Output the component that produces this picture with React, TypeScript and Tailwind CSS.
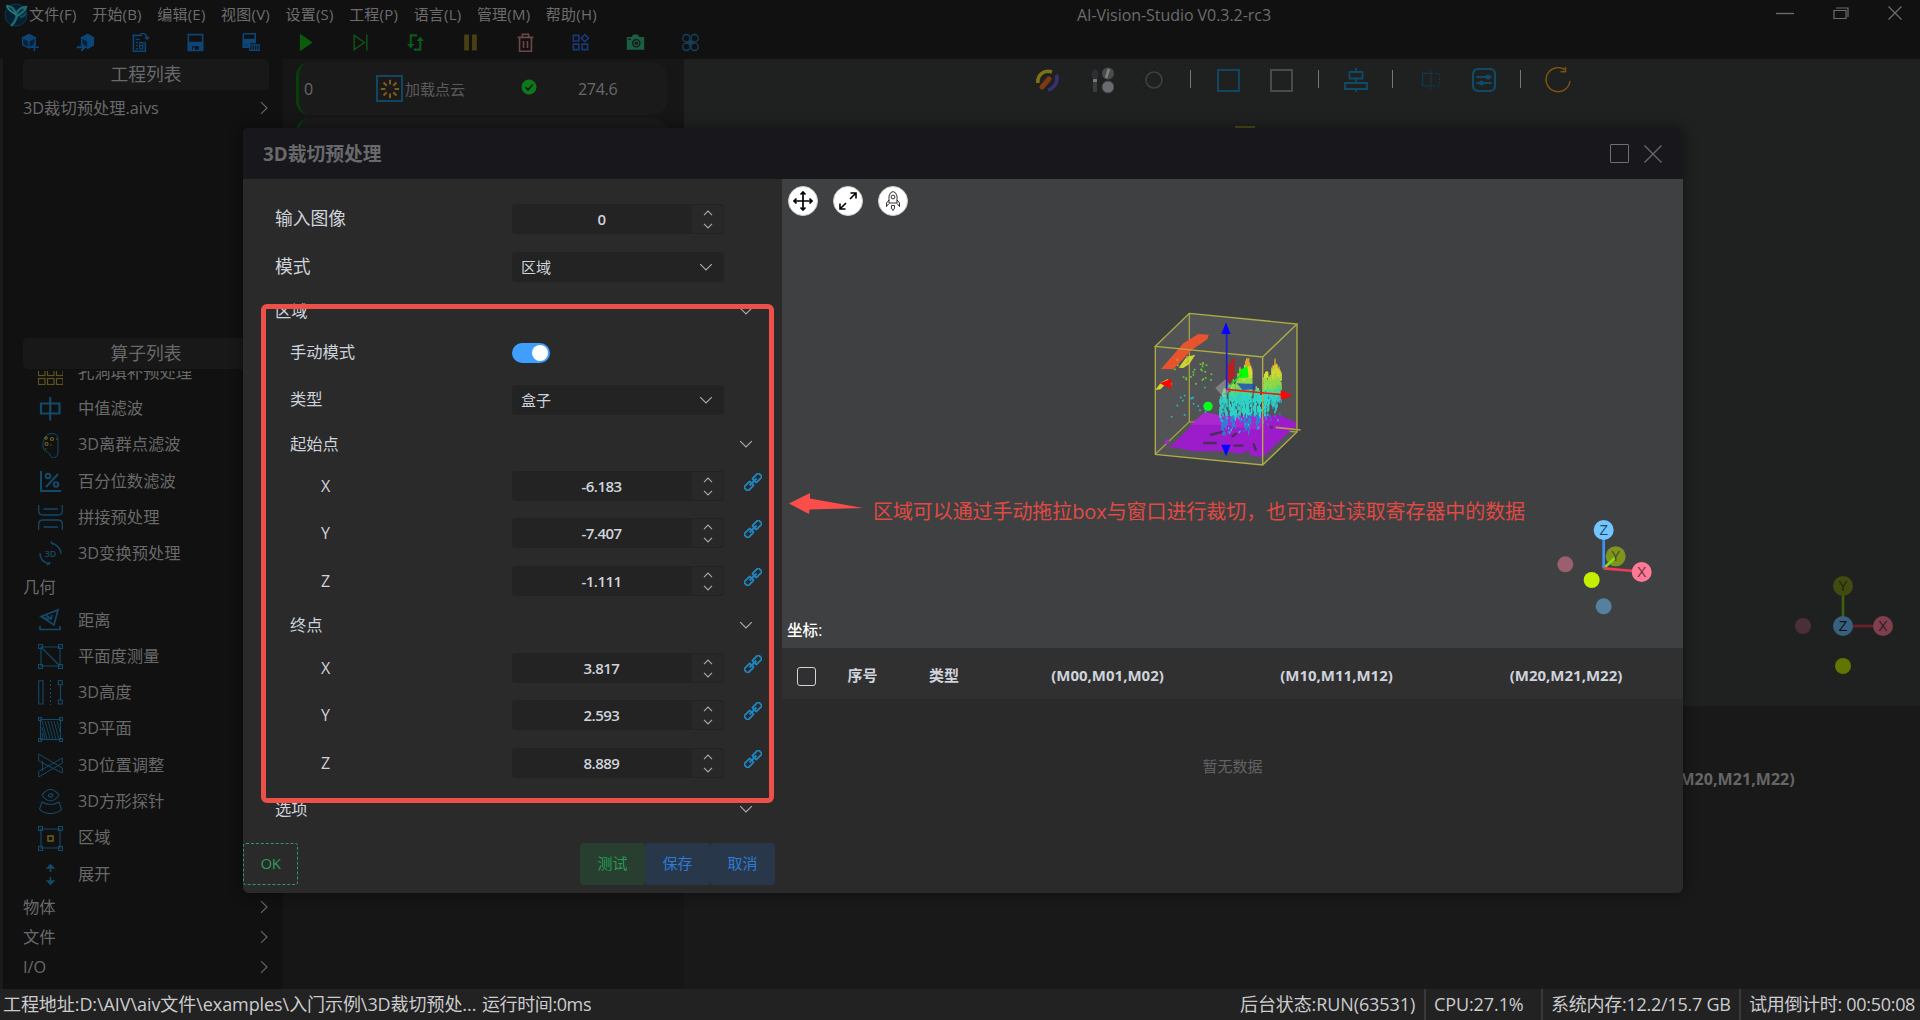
import React from "react";

type SvgProps = { children: React.ReactNode; className?: string; box?: string };

function Icon({ children, className = "", box = "0 0 24 24" }: SvgProps) {
  return (
    <svg viewBox={box} className={`shrink-0 ${className}`} fill="none" stroke="currentColor" strokeWidth="1.6">
      {children}
    </svg>
  );
}

const menus = ["文件(F)", "开始(B)", "编辑(E)", "视图(V)", "设置(S)", "工程(P)", "语言(L)", "管理(M)", "帮助(H)"];

function Logo() {
  return (
    <Icon box="0 0 26 28" className="h-[28px] w-[26px]">
      <circle cx="13" cy="14" r="11" fill="#061f2e" stroke="#0b3a52" strokeWidth="1" />
      <path d="M3 5 C8 4 12 9 13 13 C15 9 19 6 23 6 C22 11 17 13 14 15 C13 19 11 22 8 25" stroke="#1b6b70" strokeWidth="2.4" />
      <path d="M4 6 C8 12 12 12 13 14" stroke="#2b8585" strokeWidth="1.6" />
      <path d="M17 16 C20 16 22 14 23 12" stroke="#0d4f66" strokeWidth="2" />
    </Icon>
  );
}

const toolbar: { color: string; art: React.ReactNode }[] = [
  {
    color: "text-[#0e4577]",
    art: (
      <>
        <path d="M10 2 L18 6 V15 L10 19 L2 15 V6 Z" fill="#07223b" />
        <path d="M10 2 L18 6 L10 10 L2 6 Z" fill="currentColor" />
        <path d="M10 10 V19" />
        <path d="M17 13 V23 M12.5 18 H22.5" strokeWidth="2" />
      </>
    ),
  },
  {
    color: "text-[#0e4577]",
    art: (
      <>
        <path d="M15 2 L22 6 V15 L15 19 L7 15 V6 Z" fill="#07223b" />
        <path d="M15 2 L22 6 L15 10 L7 6 Z M15 10 L22 6 V15 L15 19 Z" fill="currentColor" />
        <path d="M1 18 H10 M6.5 13.5 L11 18 L6.5 22.5" strokeWidth="2.4" />
      </>
    ),
  },
  {
    color: "text-[#0e4577]",
    art: (
      <>
        <path d="M14 3 H3 V23 H18 V11" strokeWidth="2" />
        <path d="M6 8 H11 M6 12 H9 M6 16 H9 M6 20 H9 M11 12 H15 V20 H11 Z M11 16 H15" />
        <path d="M12 1 C17 0 20 2 20.5 7 M17.5 5 L20.5 8 L23 5" />
      </>
    ),
  },
  {
    color: "text-[#0e4577]",
    art: (
      <>
        <path d="M3 2 H21 V22 H3 Z" strokeWidth="2" />
        <path d="M3 12 H21 V22 H17 V16 H7 V22 H3 Z" fill="currentColor" />
        <path d="M10 18 V22" strokeWidth="2.5" />
      </>
    ),
  },
  {
    color: "text-[#0e4577]",
    art: (
      <>
        <path d="M3 1 H18 V11 M3 1 V18 H11" strokeWidth="2" />
        <path d="M3 8 H18 V12 H11 V18 H8 V13 H6 V18 H3 Z" fill="currentColor" />
        <path d="M11 15 H23 V22 H11 Z M14 15 V22 M17 15 V22 M20 15 V22" />
      </>
    ),
  },
  { color: "text-[#0a5c0c]", art: <path d="M5 1 L21 12 L5 23 Z" fill="currentColor" stroke="none" /> },
  { color: "text-[#0f5518]", art: <path d="M4 3 L17 12 L4 21 Z M20 2 V22" strokeWidth="1.8" /> },
  {
    color: "text-[#0a5c1c]",
    art: (
      <>
        <path d="M11 3 H6 V16 M13 21 H18 V8" strokeWidth="2.6" />
        <path d="M1.5 14 H10.5 L6 19.5 Z M13.5 10 H22.5 L18 4.5 Z" fill="currentColor" stroke="none" />
        <path d="M11 3 H14 M10 21 H13" strokeWidth="2.6" />
      </>
    ),
  },
  { color: "text-[#4a3f14]", art: <path d="M4 2 H10 V22 H4 Z M14 2 H20 V22 H14 Z" fill="currentColor" stroke="none" /> },
  {
    color: "text-[#6b4747]",
    art: <path d="M2 5.5 H22 M8 5 V1.5 H16 V5 M4.5 6 V23 H19.5 V6 M9.5 10 V19 M14.5 10 V19" strokeWidth="2" />,
  },
  {
    color: "text-[#19397a]",
    art: <path d="M3 3 H10 V10 H3 Z M3 14 H10 V21 H3 Z M14 14 H21 V21 H14 Z M17.5 2 L22 6.5 L17.5 11 L13 6.5 Z" strokeWidth="2" />,
  },
  {
    color: "text-[#1b5f42]",
    art: (
      <>
        <path d="M1 5 H7 L9 2 H15 L17 5 H23 V21 H1 Z" fill="currentColor" stroke="none" />
        <circle cx="13" cy="13" r="4.5" stroke="#111" />
        <circle cx="13" cy="13" r="1.5" stroke="#111" />
        <path d="M3 8 H6" stroke="#111" />
      </>
    ),
  },
  {
    color: "text-[#15425f]",
    art: (
      <>
        <circle cx="6.8" cy="6.5" r="4.6" />
        <circle cx="17.2" cy="6.5" r="4.6" />
        <circle cx="6.8" cy="17.5" r="4.6" />
        <circle cx="17.2" cy="17.5" r="4.6" />
        <path d="M8 12 H16 M12 9 V15" strokeWidth="2.4" />
      </>
    ),
  },
];

function Header() {
  return (
    <header className="h-[59px] shrink-0 bg-[#111111]">
      <div className="flex h-[29px] items-center">
        <div className="flex w-[1060px] items-center">
          <div className="flex w-[29px] justify-end">
            <Logo />
          </div>
          <nav className="flex gap-[15.6px] text-[15px] text-[#6c6c6e]">
            {menus.map((m) => (
              <span key={m} className="tracking-[0.2px]">{m}</span>
            ))}
          </nav>
        </div>
        <h1 className="ml-[17px] w-[200px] text-[16px] tracking-[-0.05px] text-[#6c6c6e]">AI-Vision-Studio V0.3.2-rc3</h1>
        <div className="ml-auto flex items-center gap-[36px] pr-[16px] pb-[4px] text-[#6c6c6e]">
          <Icon box="0 0 18 18" className="mr-[2px] size-[18px]"><path d="M0 9.5 H18" strokeWidth="1.4" /></Icon>
          <Icon box="0 0 18 18" className="size-[18px]"><path d="M2 6.5 H14 V14.5 H2 Z M4 4 H16 V13" strokeWidth="1.2" /></Icon>
          <Icon box="0 0 18 18" className="size-[18px]"><path d="M2.5 2.5 L15.5 15.5 M15.5 2.5 L2.5 15.5" strokeWidth="1.3" /></Icon>
        </div>
      </div>
      <div className="flex h-[26px] items-center pl-[3px]">
        {toolbar.map((t, i) => (
          <button key={i} className={`flex w-[55px] justify-center ${t.color}`}>
            <Icon className="size-[19px]">{t.art}</Icon>
          </button>
        ))}
      </div>
    </header>
  );
}

const corner = (x: number, y: number, s = 4) => <rect x={x} y={y} width={s} height={s} strokeWidth="1.1" />;

const filters: [string, React.ReactNode][] = [
  [
    "孔洞填补预处理",
    <g key="a" stroke="#5c551c" strokeWidth="1.2">
      {[1, 10, 19].flatMap((x) => [1, 10, 19].map((y) => <rect key={`${x}-${y}`} x={x - 0.5} y={y - 0.5} width="6.5" height="6" />))}
    </g>,
  ],
  ["中值滤波", <path key="a" d="M3 7.5 H21.5 V17.5 H3 Z M12.2 1 V24.5" strokeWidth="2.2" />],
  [
    "3D离群点滤波",
    <g key="a" strokeWidth="1">
      <path d="M11 1 C17 -0.5 20 2 20 7 V19 C20 25 14 27 12 22 C11 18 6 20 5 14 C4 10 7 2 11 1 Z" />
      <g stroke="#6b6320" strokeWidth="1.2">
        <circle cx="8" cy="5" r="1.2" />
        <circle cx="14" cy="6" r="1.5" />
        <circle cx="8.5" cy="11" r="1.5" />
        <path d="M18 6 H19.5 M12 12 H13.5 M7 16 H8.5" />
      </g>
    </g>,
  ],
  [
    "百分位数滤波",
    <g key="a" strokeWidth="2">
      <path d="M3 2 V22 H23 M8 18 L20 5" />
      <circle cx="10" cy="7" r="2.3" />
      <circle cx="18" cy="15.5" r="2.3" />
    </g>,
  ],
  [
    "拼接预处理",
    <path key="a" d="M0.7 0 V6 Q0.7 10 5 10 H20 Q24.3 10 24.3 6 V0 M5.5 4 H20 M0.7 25 V19 Q0.7 15 5 15 H20 Q24.3 15 24.3 19 V25 M5.5 22 H20" strokeWidth="1.3" />,
  ],
  [
    "3D变换预处理",
    <g key="a">
      <path d="M13 2 C19 3 23 8 23 13 M2 12 C2 18 6 22 12 23 M13 0.5 L15 3.5 M12 21 L9 24" strokeWidth="1.5" />
      <text x="12.5" y="16" textAnchor="middle" fontSize="9" fontWeight="600" fill="currentColor" stroke="none">3D</text>
    </g>,
  ],
];

const geometry: [string, React.ReactNode][] = [
  [
    "距离",
    <g key="a" strokeWidth="1.7">
      <path d="M3 8.5 L20 2 L16 17 Z M3 8.5 L11 11.5 M8.5 7.5 L13 11 L14 7 M2 18 V21.5 H22 V18" />
    </g>,
  ],
  [
    "平面度测量",
    <g key="a" strokeWidth="1.1">
      <path d="M3 3 H22 V22 H3 Z M3 3 L22 22" />
      {corner(0.5, 0.5)}
      {corner(20.5, 0.5)}
      {corner(0.5, 20.5)}
      {corner(20.5, 20.5)}
    </g>,
  ],
  [
    "3D高度",
    <g key="a" strokeWidth="1.1">
      <path d="M0.7 0.7 H5 V24 H0.7 Z M22.5 5 V20" />
      <path d="M12.5 0 V25" strokeDasharray="2 2" strokeWidth="1" />
      {corner(20.3, 0.7)}
      {corner(20.3, 20)}
    </g>,
  ],
  [
    "3D平面",
    <g key="a" strokeWidth="1.1">
      <rect x="2.5" y="2.5" width="20" height="20" />
      <path d="M4 4 L9 22 M7 4 L12 22 M10 4 L15 22 M13 4 L18 22 M16 4 L21 22 M19 4 L22 15 M4 10 L7 22 M4 16 L5 22" strokeWidth="0.9" />
      {corner(0.5, 0.5, 3)}
      {corner(21.5, 0.5, 3)}
      {corner(0.5, 21.5, 3)}
      {corner(21.5, 21.5, 3)}
    </g>,
  ],
  [
    "3D位置调整",
    <path key="a" d="M0.7 1 L24.3 15 V20 L0.7 8 Z M0.7 24 L24.3 10 V5 L0.7 18.5 Z M4.5 8 V18" strokeWidth="1" />,
  ],
  [
    "3D方形探针",
    <g key="a" strokeWidth="1.1">
      <path d="M4 6 Q12.5 -5 21 6 Q12.5 18 4 6 Z M4 13 Q12.5 18 21 13 L23.5 20 Q20 24.5 12.5 24.5 Q5 24.5 1.5 20 Z" />
      <ellipse cx="12.5" cy="6.5" rx="2.2" ry="1.6" />
    </g>,
  ],
  [
    "区域",
    <g key="a" strokeWidth="1.1">
      <path d="M3 3 H22 V22 H3 Z" />
      {corner(0.5, 0.5)}
      {corner(20.5, 0.5)}
      {corner(0.5, 20.5)}
      {corner(20.5, 20.5)}
      <rect x="10" y="10" width="5" height="5" stroke="#6b6320" strokeWidth="1.5" />
    </g>,
  ],
  [
    "展开",
    <path key="a" d="M12.5 3 V10 M12.5 15 V22 M9.5 6 L12.5 3 L15.5 6 Z M9.5 19 L12.5 22 L15.5 19 Z" strokeWidth="1.6" fill="currentColor" />,
  ],
];

function Operator({ name, art }: { name: string; art: React.ReactNode }) {
  return (
    <li className="flex h-[36.3px] items-center pl-[35px]">
      <span className="text-[#134a69]">
        <Icon box="0 0 25 25" className="size-[25px]">{art}</Icon>
      </span>
      <span className="ml-[15px] pb-px">{name}</span>
    </li>
  );
}

function Chevron({ className = "" }: { className?: string }) {
  return (
    <Icon box="0 0 14 14" className={`size-[14px] ${className}`}>
      <path d="M4 1.2 L10 7 L4 12.8" strokeWidth="1.1" />
    </Icon>
  );
}

function Sidebar() {
  return (
    <aside className="flex w-[283px] shrink-0 flex-col border-l-[3px] border-[#1b1b1b] bg-[#111111] text-[16.3px] text-[#69696b]">
      <section className="h-[279px]">
        <h2 className="ml-[20px] flex h-[31px] w-[246px] items-center justify-center rounded-[5px] bg-[#181818] text-[17.8px]">工程列表</h2>
        <div className="mt-[2px] flex h-[32px] items-center justify-between pr-[12px] pl-[20px]">
          <span>3D裁切预处理.aivs</span>
          <Chevron />
        </div>
      </section>
      <section className="flex min-h-0 grow flex-col">
        <h2 className="ml-[20px] flex h-[31px] w-[246px] shrink-0 items-center justify-center rounded-[5px] bg-[#181818] text-[17.8px]">算子列表</h2>
        <div className="mt-[2px] min-h-0 grow overflow-hidden">
          <ul className="mt-[-16.7px]">
            {filters.map(([n, a]) => (
              <Operator key={n} name={n} art={a} />
            ))}
          </ul>
          <h3 className="flex h-[30px] items-center pl-[20px]">几何</h3>
          <ul>
            {geometry.map(([n, a]) => (
              <Operator key={n} name={n} art={a} />
            ))}
          </ul>
          {["物体", "文件", "I/O"].map((n) => (
            <div key={n} className="flex h-[30px] items-center justify-between pr-[12px] pl-[20px]">
              <span>{n}</span>
              <Chevron />
            </div>
          ))}
        </div>
      </section>
    </aside>
  );
}

function FlowPanel() {
  const rays = [0, 45, 90, 135, 180, 225, 270, 315];
  return (
    <section className="flex w-[401px] shrink-0 flex-col gap-[3px] bg-[#161616] pt-[3px] pl-[13px] text-[16px] text-[#69696b]">
      <div className="flex h-[53px] w-[371px] items-center rounded-[14px] border-l-[3px] border-[#073f09] bg-[#1a1a1a]">
        <span className="ml-[5px] w-[72px]">0</span>
        <span className="flex size-[27px] items-center justify-center border-2 border-[#12455f]">
          <Icon box="0 0 24 24" className="size-[22px] text-[#81591a]">
            {rays.map((r) => (
              <path key={r} d="M12 2 V7" strokeWidth="2.2" transform={`rotate(${r} 12 12)`} />
            ))}
          </Icon>
        </span>
        <span className="ml-[2px] w-[116px] pt-[2px] text-[15px] text-[#5a5a5c]">加载点云</span>
        <Icon box="0 0 16 16" className="mb-[4px] size-[16px]">
          <circle cx="8" cy="8" r="7.5" fill="#0c7a1b" stroke="none" />
          <path d="M4.5 8.2 L7 10.8 L11.8 5.6" stroke="#111" strokeWidth="1.5" />
        </Icon>
        <span className="ml-[41px] tracking-[-0.3px]">274.6</span>
      </div>
      <div className="h-[53px] w-[371px] rounded-[14px] border-l-[3px] border-[#073f09] bg-[#1a1a1a]" />
    </section>
  );
}

function Divider({ className }: { className: string }) {
  return (
    <span className={`flex justify-center ${className}`}>
      <span className="mb-[3px] h-[18px] w-px bg-[#77777a]" />
    </span>
  );
}

function Workspace() {
  const cell = "flex justify-center";
  return (
    <main className="relative flex grow flex-col bg-[#191919]">
      <div className="relative h-[647px] bg-[#1f2120]">
        <div className="flex h-[42px] items-center pl-[336px]">
          <span className={`${cell} w-[54px]`}>
            <Icon className="size-[24px]">
              <path d="M3 15 C2 8 8 1 17 4" stroke="#81701a" strokeWidth="3.6" />
              <path d="M7 19 L14 11" stroke="#7c3a14" strokeWidth="5" strokeLinecap="round" />
              <path d="M21 7 C24 12 20 20 13 22" stroke="#393070" strokeWidth="3.6" />
            </Icon>
          </span>
          <span className={`${cell} w-[56px]`}>
            <Icon box="0 0 24 27" className="h-[27px] w-[24px]">
              <path d="M5 13 V25" stroke="#3c3c3e" strokeWidth="4" />
              <path d="M5 12 V15" stroke="#77777a" strokeWidth="4" />
              <path d="M5 2 C9 4 9 8 7 12 H3 C1 8 1 4 5 2 Z" fill="#2b2f33" stroke="none" />
              <circle cx="18" cy="6.5" r="6" fill="#4a4b4d" stroke="none" />
              <path d="M16 11 L19 2" stroke="#808080" strokeWidth="2.5" />
              <circle cx="18" cy="20" r="6" fill="#6a6b6d" stroke="#3b4249" strokeWidth="1" />
            </Icon>
          </span>
          <span className={`${cell} w-[48px]`}>
            <Icon className="size-[24px] text-[#3e4040]">
              <circle cx="12" cy="12" r="8" />
              <path d="M12 0 V1.5 M12 22.5 V24 M0 12 H1.5 M22.5 12 H24 M3.5 3.5 L4.5 4.5 M19.5 4.5 L20.5 3.5 M3.5 20.5 L4.5 19.5 M19.5 19.5 L20.5 20.5" stroke="#151616" />
            </Icon>
          </span>
          <Divider className="w-[24px]" />
          <span className={`${cell} w-[53px]`}><span className="size-[23px] border-2 border-[#12455f]" /></span>
          <span className={`${cell} w-[53px]`}><span className="size-[23px] border-2 border-[#494b4b]" /></span>
          <Divider className="w-[20px]" />
          <span className={`${cell} w-[56px]`}>
            <Icon className="size-[24px] text-[#114a67]">
              <path d="M5.5 4 H18.5 V10.5 H5.5 Z M1 15 H23 V21 H1 Z M12 0 V4 M12 10.5 V15 M12 21 V24" strokeWidth="1.8" />
            </Icon>
          </span>
          <Divider className="w-[16px]" />
          <span className={`${cell} w-[62px]`}>
            <Icon className="size-[20px] text-[#12374b]">
              <path d="M12 4 H2 V19 H12 M12 1 V23" strokeWidth="1.5" />
              <path d="M12 4 H22 V19 H12" strokeDasharray="3 2" strokeWidth="1.5" />
            </Icon>
          </span>
          <span className={`${cell} w-[44px]`}>
            <Icon className="size-[24px] text-[#114a67]">
              <rect x="1" y="1" width="22" height="22" rx="5" strokeWidth="2.2" />
              <path d="M4.5 9 H19.5 M4.5 15 H19.5" strokeWidth="2" />
              <circle cx="16" cy="9" r="1.7" fill="currentColor" />
              <circle cx="9.5" cy="15" r="1.7" fill="currentColor" />
            </Icon>
          </span>
          <Divider className="w-[28px]" />
          <span className={`${cell} w-[48px]`}>
            <Icon box="0 0 26 26" className="size-[26px] text-[#80500f]">
              <path d="M25 14 A12 12 0 1 1 19.5 2.5 M20.5 0 V4.8 L15.5 4.8" strokeWidth="1.5" />
            </Icon>
          </span>
        </div>
        <span className="absolute top-[67px] left-[551px] h-[2px] w-[20px] bg-[#4b4b14]" />
        <svg viewBox="810 210 330 330" className="absolute top-[511px] left-[1106px] size-[110px]">
          <circle cx="849" cy="378" r="24" fill="#4a2f36" />
          <path d="M969 378 V285" stroke="#425e10" strokeWidth="8" />
          <path d="M969 378 H1065" stroke="#6d2029" strokeWidth="8" />
          <circle cx="969" cy="258" r="30" fill="#414b0f" />
          <circle cx="969" cy="378" r="30" fill="#38617f" />
          <circle cx="1089" cy="378" r="30" fill="#7e404d" />
          <circle cx="969" cy="498" r="24" fill="#617500" />
          <g fontSize="42" textAnchor="middle" className="font-['Liberation_Sans']">
            <text x="969" y="273" fill="#1f250c">Y</text>
            <text x="969" y="393" fill="#0a0f14">Z</text>
            <text x="1089" y="393" fill="#35191f">X</text>
          </g>
        </svg>
      </div>
      <span className="mt-[61px] ml-[990px] text-[16px] leading-[24px] font-bold tracking-[0.05px] text-[#666668]">(M20,M21,M22)</span>
    </main>
  );
}

function StatusBar() {
  const cell = "flex h-full items-center border-l-2 border-[#3a3a3a] pl-[8px]";
  return (
    <footer className="flex h-[31px] shrink-0 items-center bg-[#222222] pl-[3px] text-[18px] whitespace-nowrap text-[#cccccf]">
      <span className="w-[479px] tracking-[-0.07px]">工程地址:D:\AIV\aiv文件\examples\入门示例\3D裁切预处...</span>
      <span className="tracking-[-0.4px]">运行时间:0ms</span>
      <div className="ml-auto flex h-full items-center">
        <span className="w-[184px] tracking-[-0.1px]">后台状态:RUN(63531)</span>
        <span className={`${cell} w-[117px] tracking-[-0.1px]`}>CPU:27.1%</span>
        <span className={`${cell} w-[198px] tracking-[-0.25px]`}>系统内存:12.2/15.7 GB</span>
        <span className={`${cell} w-[181px] tracking-[-0.3px]`}>试用倒计时: 00:50:08</span>
      </div>
    </footer>
  );
}

function DownArrow({ className = "" }: { className?: string }) {
  return (
    <Icon box="0 0 14 14" className={`size-[14px] text-[#a9abb0] ${className}`}>
      <path d="M1.2 4.2 L7 10 L12.8 4.2" strokeWidth="1.2" />
    </Icon>
  );
}

function NumberField({ value }: { value: string }) {
  return (
    <div className="flex h-[30px] w-[212px] items-center rounded-[4px] bg-[#232323] pr-px">
      <span className="w-[179px] text-center text-[15px] font-semibold tracking-[-0.5px] text-[#cfd3dc]">{value}</span>
      <span className="ml-px flex h-[28px] w-[31px] flex-col items-center justify-center gap-[5px] rounded-r-[4px] bg-[#282828] text-[#a9abb0]">
        <Icon box="0 0 10 8" className="h-[8px] w-[10px]"><path d="M1 6.2 L5 2 L9 6.2" strokeWidth="1.1" /></Icon>
        <Icon box="0 0 10 8" className="h-[8px] w-[10px]"><path d="M1 1.8 L5 6 L9 1.8" strokeWidth="1.1" /></Icon>
      </span>
    </div>
  );
}

function SelectField({ value }: { value: string }) {
  return (
    <div className="flex h-[30px] w-[212px] items-center justify-between rounded-[4px] bg-[#232323] pr-[11px] pl-[9px]">
      <span className="pt-px text-[15px] text-[#cfd3dc]">{value}</span>
      <DownArrow />
    </div>
  );
}

function LinkIcon() {
  return (
    <Icon box="0 0 18 18" className="mb-[8px] ml-[20px] size-[18px] text-[#1f86bf]">
      <g transform="rotate(-45 9 9)" strokeWidth="1.9">
        <rect x="-1.2" y="6.2" width="8.4" height="5.6" rx="0.8" />
        <rect x="10.8" y="6.2" width="8.4" height="5.6" rx="0.8" />
        <path d="M4 9 H14" />
      </g>
    </Icon>
  );
}

function Row({ className, label, labelClass, children }: { className: string; label: string; labelClass: string; children: React.ReactNode }) {
  return (
    <div className={`flex items-center ${className}`}>
      <div className="flex w-[269px] shrink-0 pb-[2px]">
        <span className={labelClass}>{label}</span>
      </div>
      {children}
    </div>
  );
}

function GroupHead({ className, label, labelClass }: { className: string; label: string; labelClass: string }) {
  return (
    <div className={`flex items-center justify-between pr-[29px] ${className}`}>
      <span className={labelClass}>{label}</span>
      <DownArrow className="mb-px" />
    </div>
  );
}

const sub = "ml-[47px] text-[16.3px]";
const axis = "ml-[78px] pt-[2px] text-[16px]";

function Coordinates({ values }: { values: [string, string, string] }) {
  return (
    <>
      <Row className="h-[46px]" label="X" labelClass={axis}><NumberField value={values[0]} /><LinkIcon /></Row>
      <Row className="h-[48px]" label="Y" labelClass={axis}><NumberField value={values[1]} /><LinkIcon /></Row>
      <Row className="h-[48px]" label="Z" labelClass={axis}><NumberField value={values[2]} /><LinkIcon /></Row>
    </>
  );
}

function SettingsForm() {
  return (
    <div className="relative flex w-[539px] shrink-0 flex-col bg-[#2a2a2a] pt-[16px] text-[#cfd3dc]">
      <Row className="h-[48px]" label="输入图像" labelClass="ml-[32px] text-[17.8px]"><NumberField value="0" /></Row>
      <Row className="h-[48px]" label="模式" labelClass="ml-[32px] text-[17.8px]"><SelectField value="区域" /></Row>
      <GroupHead className="h-[40px]" label="区域" labelClass="ml-[32px] text-[16.3px]" />
      <Row className="h-[44px]" label="手动模式" labelClass={`${sub} pt-px`}>
        <span className="flex h-[20px] w-[38px] items-center justify-end rounded-full bg-[#409eff] pr-[2px]">
          <span className="size-[16px] rounded-full bg-white" />
        </span>
      </Row>
      <Row className="h-[50px]" label="类型" labelClass={`${sub} pt-px`}><SelectField value="盒子" /></Row>
      <GroupHead className="h-[38px]" label="起始点" labelClass={`${sub} pt-px`} />
      <Coordinates values={["-6.183", "-7.407", "-1.111"]} />
      <GroupHead className="h-[40px]" label="终点" labelClass={`${sub} pt-px`} />
      <Coordinates values={["3.817", "2.593", "8.889"]} />
      <GroupHead className="h-[44px]" label="选项" labelClass="ml-[32px] text-[16.3px]" />
      <div className="mt-[12px] flex h-[42px] text-[15px]">
        <button className="w-[55px] rounded-[3px] border border-dashed border-[#2e9a60] pb-[2px] tracking-[-0.4px] text-[#2e9a60]">OK</button>
        <button className="ml-[282px] w-[65px] rounded-[4px] bg-[#283f2f] pb-[2px] text-[#259a56]">测试</button>
        <button className="w-[65px] rounded-[4px] bg-[#28384a] pb-[2px] text-[#2d7bd6]">保存</button>
        <button className="w-[65px] rounded-[4px] bg-[#28384a] pb-[2px] text-[#2d7bd6]">取消</button>
      </div>
      <div className="pointer-events-none absolute top-[125px] left-[18px] h-[499px] w-[513px] rounded-[6px] border-[5px] border-[#ed4f49]" />
    </div>
  );
}

/* Small deterministic generator so that the cloud is identical on every paint. */
function makeRandom(seed: number) {
  let s = seed;
  return () => {
    s = (s * 16807) % 2147483647;
    return s / 2147483647;
  };
}

function heightColor(y: number) {
  if (y < 228) return "#e0a030";
  if (y < 262) return "#d4dc34";
  if (y < 292) return "#8fdc48";
  if (y < 312) return "#48dc90";
  if (y < 375) return "#2fd4c8";
  return "#2a84d0";
}

function buildCloud() {
  const rand = makeRandom(97);
  const dots: { x: number; y: number; w: number; h: number; c: string }[] = [];
  const columns: [number, number, number, number][] = [
    [298, 322, 282, 445],
    [326, 348, 262, 425],
    [346, 368, 226, 400],
    [366, 396, 190, 440],
    [398, 424, 272, 420],
    [426, 448, 228, 400],
    [448, 482, 200, 378],
  ];
  columns.forEach(([x0, x1, top, bottom]) => {
    const mid = (x0 + x1) / 2;
    const half = (x1 - x0) / 2;
    for (let x = x0; x < x1; x += 3) {
      const off = Math.abs(x - mid) / half;
      const peak = top + off * 45 + rand() * 18;
      const end = bottom - off * 50 - rand() * 20;
      for (let y = peak; y < end; y += 6) {
        const deep = y > 330;
        if (rand() < (deep ? 0.62 : 0.93)) {
          dots.push({ x, y, w: 4, h: 7 + rand() * 6, c: heightColor(y + rand() * 16 - 8) });
        }
      }
    }
  });
  for (let i = 0; i < 60; i++) {
    const x = 296 + rand() * 186;
    dots.push({ x, y: 350 + rand() * 90 - (x - 300) * 0.25, w: 4, h: 7, c: rand() > 0.4 ? "#2a7fd0" : "#2bbcd0" });
  }
  for (let i = 0; i < 46; i++) {
    const y = 195 + rand() * 185;
    dots.push({ x: 135 + rand() * 120 + (y < 270 ? 35 : 0) * rand(), y, w: 5, h: 5, c: y < 220 ? "#b0b030" : y < 290 ? "#5fd03a" : "#2bb8c0" });
  }
  return dots;
}

const cloud = buildCloud();

function PointCloud() {
  return (
    <svg viewBox="0 0 660 600" className="absolute top-[111px] left-[338px] h-[200px] w-[220px]">
      <path d="M208 70 L531 102 L531 426 L428 525 L106 493 L106 169 Z" fill="#ffffff" opacity="0.1" />
      <path d="M208 395 L531 426 M208 70 V395 L106 493" stroke="#a39f43" strokeWidth="4" fill="none" />
      <path d="M255 366 L300 376 L480 376 L535 400 L430 500 L395 498 L385 482 L362 492 L320 484 L222 484 L160 472 L145 474 L178 444 Z" fill="#9c1ccb" />
      <path d="M255 366 L300 376 L440 385 L420 420 L300 404 L208 404 Z" fill="#b52fd0" opacity="0.6" />
      <path d="M250 459 H290 M270 435 L310 425 M340 467 H370 M400 460 L408 482 M335 440 L350 430 M450 412 H458" stroke="#4c2c58" strokeWidth="7" />
      <path d="M133 455 L143 446 L150 455 L140 465 Z" fill="#a32cc4" />
      <path d="M123 237 L190 160 L235 132 L266 134 L262 148 L215 180 L160 238 Z" fill="#e6532c" />
      <path d="M176 233 L200 200 L226 194 L208 222 L190 234 Z" fill="#cfd432" />
      <path d="M106 300 L122 278 L145 266 L140 278 L122 298 Z" fill="#cfd432" />
      <path d="M323 225 L344 202 V258 L323 285 Z" fill="#b52222" />
      <g>
        {cloud.map((d, i) => (
          <rect key={i} x={d.x} y={d.y} width={d.w} height={d.h} fill={d.c} />
        ))}
      </g>
      <path d="M356 242 L382 228 L386 262 L360 265 Z" fill="#00ff00" />
      <path d="M350 280 L402 282 L405 298 L368 300 Z" fill="#1846c0" opacity="0.8" />
      <path d="M320 296 L366 252" stroke="#10d820" strokeWidth="5" />
      <path d="M286 294 L316 268 L338 292 L312 324 Z" fill="#d8d8d8" opacity="0.35" />
      <path d="M106 169 L428 201 L531 102 L208 70 Z M106 169 V493 L428 525 V201 M428 525 L531 426 V102" stroke="#b0ac46" strokeWidth="4" fill="none" />
      <path d="M467 412 L542 420" stroke="#b59b50" strokeWidth="5" />
      <path d="M320 298 V125" stroke="#1a1ad8" strokeWidth="5" />
      <path d="M304 132 L318 97 L332 132 Z M304 464 L332 464 L318 499 Z" fill="#0505ff" />
      <path d="M320 298 L485 314" stroke="#f01818" strokeWidth="5" />
      <path d="M482 300 L518 317 L482 329 Z M119 280 L154 266 V297 Z" fill="#ff0505" />
      <circle cx="264" cy="349" r="14" fill="#05ff1c" />
    </svg>
  );
}

function OrientationGizmo() {
  return (
    <svg viewBox="100 50 300 300" className="absolute top-[338px] left-[771.6px] size-[100px]">
      <circle cx="134" cy="192" r="24" fill="#9c5f6e" />
      <circle cx="249" cy="318" r="24" fill="#56809f" />
      <circle cx="285" cy="168" r="30" fill="#7f931f" />
      <path d="M249 204 L282 174" stroke="#86dc12" strokeWidth="8" />
      <path d="M249 204 V110" stroke="#3c91f5" strokeWidth="8" />
      <path d="M249 204 L340 212" stroke="#ee3b56" strokeWidth="8" />
      <circle cx="249" cy="89" r="30" fill="#73c5ff" />
      <circle cx="363" cy="215" r="30" fill="#ff7a96" />
      <circle cx="213" cy="239" r="24" fill="#c4f000" />
      <g fontSize="42" textAnchor="middle" className="font-['Liberation_Sans']">
        <text x="249" y="104" fill="#254661">Z</text>
        <text x="285" y="183" fill="#464f1c">Y</text>
        <text x="363" y="230" fill="#6e3040">X</text>
      </g>
    </svg>
  );
}

function RoundButton({ children }: { children: React.ReactNode }) {
  return (
    <button className="flex size-[30px] items-center justify-center rounded-full border border-[#d0d0d0] bg-white text-black">
      <Icon box="0 0 20 20" className="size-[20px]">{children}</Icon>
    </button>
  );
}

function Preview() {
  return (
    <div className="flex grow flex-col">
      <div className="relative h-[469px] bg-[#3f4041]">
        <div className="flex gap-[15px] pt-[7px] pl-[6px]">
          <RoundButton>
            <path d="M10 1 V19 M1 10 H19 M7.5 3.5 L10 1 L12.5 3.5 M7.5 16.5 L10 19 L12.5 16.5 M3.5 7.5 L1 10 L3.5 12.5 M16.5 7.5 L19 10 L16.5 12.5" strokeWidth="1.7" />
          </RoundButton>
          <RoundButton>
            <path d="M12 8 L18 2 M12.5 2 H18 V7.5 M8 12 L2 18 M2 12.5 V18 H7.5" strokeWidth="1.6" />
          </RoundButton>
          <RoundButton>
            <path d="M6 12 V5 Q7 1 10 0.5 Q13 1 14 5 V12 Z M6 9 L3.5 12 V15.5 L6 12.5 M14 9 L16.5 12 V15.5 L14 12.5 M8.5 14.5 Q7.5 17 10 19.5 Q12.5 17 11.5 14.5 Z" strokeWidth="0.8" />
            <circle cx="10" cy="6" r="1.9" strokeWidth="0.8" />
          </RoundButton>
        </div>
        <PointCloud />
        <OrientationGizmo />
        <svg viewBox="0 0 76 24" className="absolute top-[313px] left-[6px] h-[24px] w-[76px]">
          <path d="M1 11.5 L22 1 L22 6.5 L75 16 L21.5 17.5 L21 22 Z" fill="#fb4d49" />
        </svg>
        <p className="absolute top-[318px] left-[91px] text-[20px] leading-[30px] tracking-[-0.08px] whitespace-nowrap text-[#e04a44]">
          区域可以通过手动拖拉box与窗口进行裁切，也可通过读取寄存器中的数据
        </p>
        <span className="absolute bottom-[7px] left-[5px] text-[15.6px] leading-[22px] font-medium text-white">坐标:</span>
      </div>
      <div className="flex h-[51px] items-center bg-[#303030] pt-[6px] text-center text-[15px] font-bold text-[#cfd3dc]">
        <span className="ml-[15px] size-[19px] rounded-[3px] border border-[#cfd3dc]" />
        <span className="ml-[14px] w-[65px] pb-[2px]">序号</span>
        <span className="w-[98px] pb-[2px]">类型</span>
        <span className="w-[229px] pb-[2px]">(M00,M01,M02)</span>
        <span className="w-[229px] pb-[2px]">(M10,M11,M12)</span>
        <span className="w-[230px] pb-[2px]">(M20,M21,M22)</span>
      </div>
      <div className="flex grow justify-center rounded-br-[6px] bg-[#2a2a2a] pt-[55px] text-[15px] leading-[24px] text-[#606266]">暂无数据</div>
    </div>
  );
}

function CropDialog() {
  return (
    <div className="absolute top-[128px] left-[243px] flex h-[765px] w-[1440px] flex-col overflow-hidden rounded-[6px] bg-[#2a2a2a] shadow-[0_0_14px_rgba(0,0,0,0.45)]">
      <div className="flex h-[51px] shrink-0 items-center justify-between bg-[#18171c] pr-[20px] pl-[20px] text-[#69696c]">
        <h2 className="pt-[2px] text-[18.8px] font-bold">3D裁切预处理</h2>
        <div className="flex items-center gap-[14px]">
          <span className="size-[19px] rounded-[1px] border-[1.5px] border-[#6f6f73]" />
          <Icon box="0 0 20 20" className="size-[20px]"><path d="M1.5 1.5 L18.5 18.5 M18.5 1.5 L1.5 18.5" strokeWidth="1.3" /></Icon>
        </div>
      </div>
      <div className="flex grow">
        <SettingsForm />
        <Preview />
      </div>
    </div>
  );
}

export default function App() {
  return (
    <div className="relative flex h-[1020px] w-[1920px] flex-col overflow-hidden bg-[#111111] font-['Open_Sans','Noto_Sans_CJK_SC',sans-serif]">
      <Header />
      <div className="flex min-h-0 grow">
        <Sidebar />
        <FlowPanel />
        <Workspace />
      </div>
      <StatusBar />
      <CropDialog />
    </div>
  );
}
